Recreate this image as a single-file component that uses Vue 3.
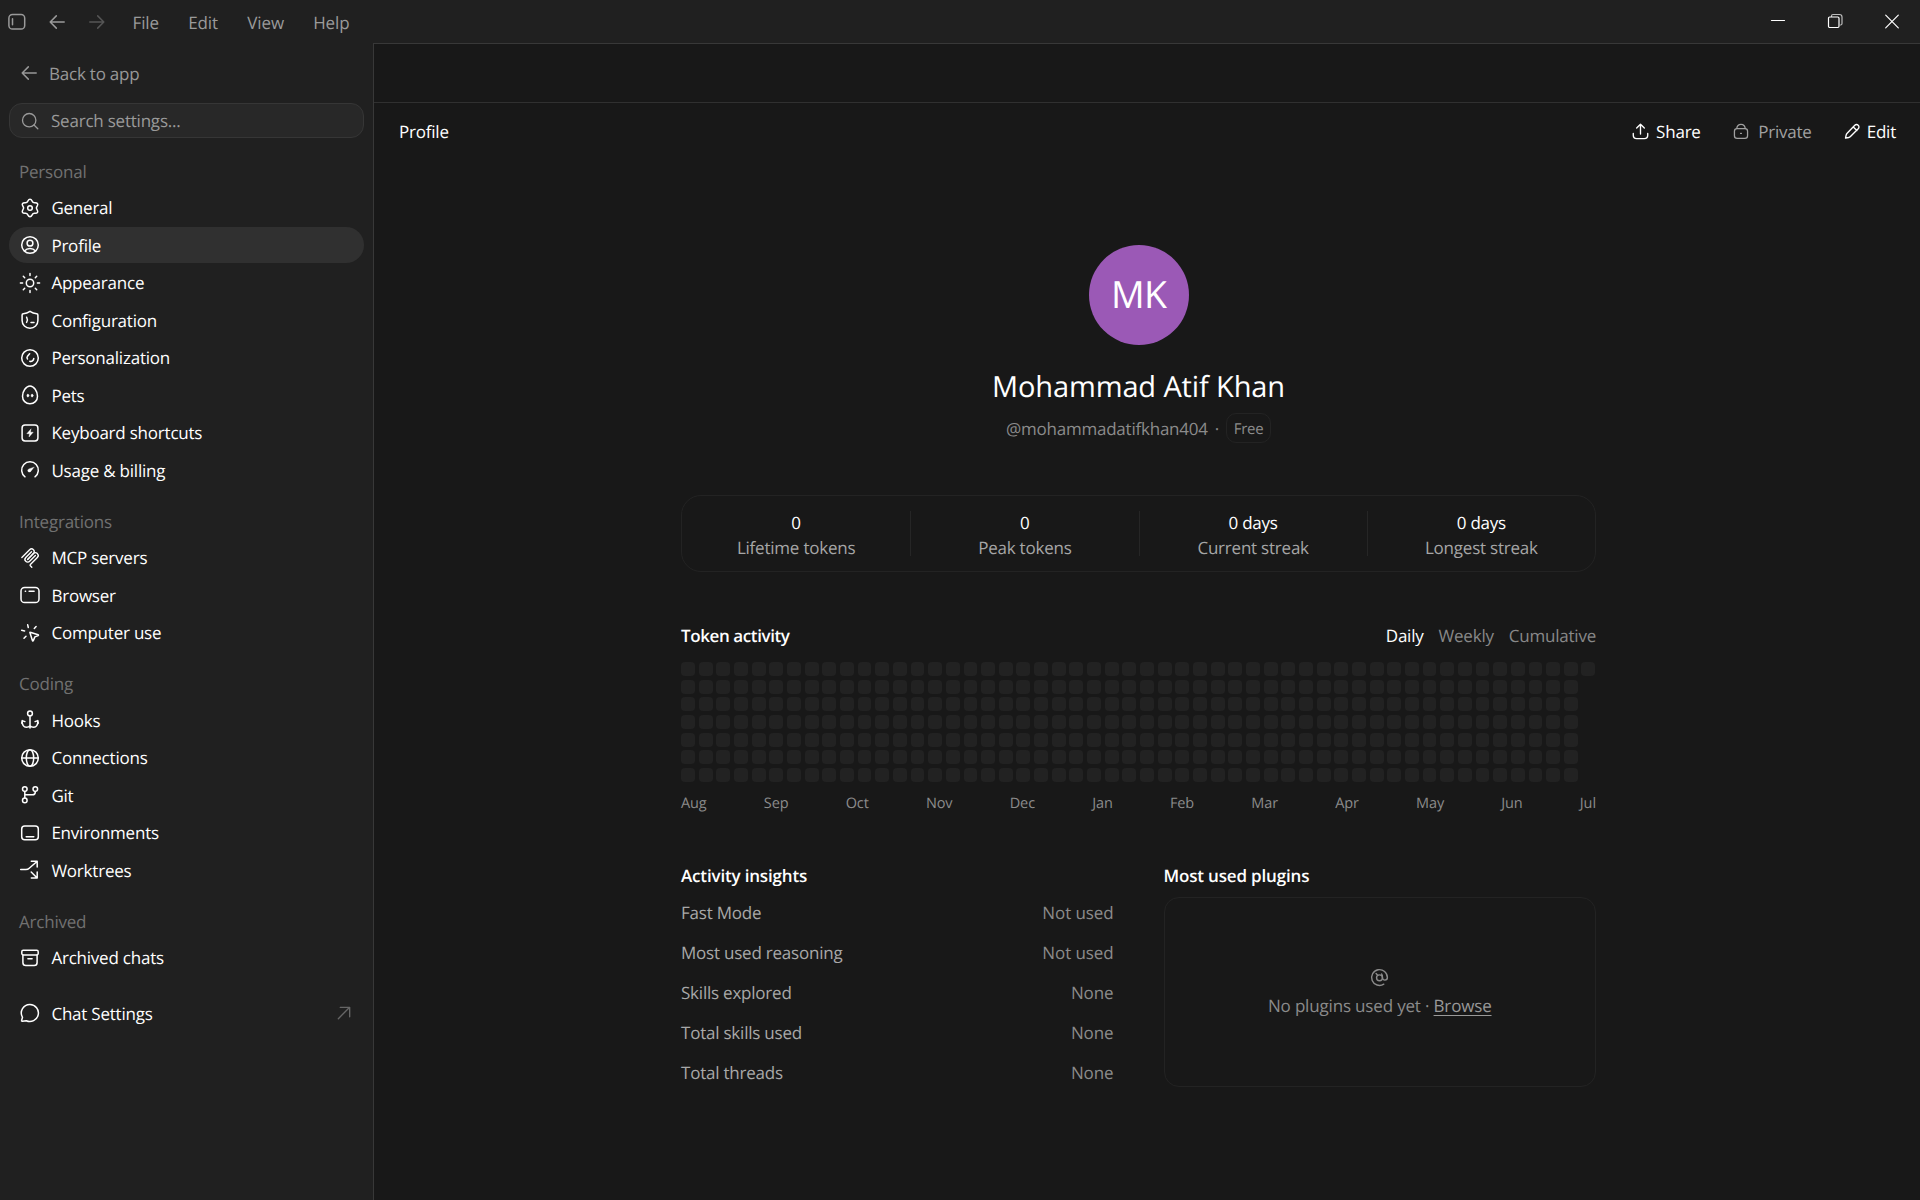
<template>
  <div class="app">
    <header class="titlebar">
      <div class="titlebar-left">
        <svg class="tb-icon" viewBox="0 0 20 20" v-html="icons.panel"></svg>
        <svg class="tb-icon" viewBox="0 0 20 20" v-html="icons.back"></svg>
        <svg class="tb-icon dim" viewBox="0 0 20 20" v-html="icons.forward"></svg>
        <nav class="menu">
          <span v-for="m in menus" :key="m">{{ m }}</span>
        </nav>
      </div>
      <div class="window-controls">
        <svg viewBox="0 0 20 20"><path d="M3.5 9.500h13" /></svg>
        <svg viewBox="0 0 20 20">
          <path class="ghost" d="M6.5 5.5V5c0-.8.5-1.500 1.500-1.500h6.500c1.500 0 2.500 1 2.500 2.500V12.500c0 .8-.6 1.500-1.500 1.500" />
          <rect x="3.500" y="6" width="10.500" height="10.500" rx="1.200" />
        </svg>
        <svg viewBox="0 0 20 20"><path d="M3.700 4.200l12.600 12.600M16.300 4.200L3.700 16.800" /></svg>
      </div>
    </header>

    <div class="body">
      <aside class="sidebar">
        <div class="back-link">
          <svg viewBox="0 0 20 20" v-html="icons.back"></svg>
          <span>Back to app</span>
        </div>
        <div class="search">
          <svg viewBox="0 0 20 20" v-html="icons.search"></svg>
          <span>Search settings...</span>
        </div>

        <section class="nav-group" v-for="group in groups" :key="group.title">
          <h3 class="nav-label">{{ group.title }}</h3>
          <div class="nav-list">
            <div
              class="nav-item"
              v-for="item in group.items"
              :key="item.label"
              :class="{ active: item.label === 'Profile' }"
            >
              <svg viewBox="0 0 20 20" v-html="icons[item.icon]"></svg>
              <span>{{ item.label }}</span>
            </div>
          </div>
        </section>

        <div class="nav-item chat-settings">
          <svg viewBox="0 0 20 20" v-html="icons.chat"></svg>
          <span>Chat Settings</span>
          <svg class="external" viewBox="0 0 20 20" v-html="icons.external"></svg>
        </div>
      </aside>

      <main class="main">
        <div class="toolbar"></div>

        <div class="page-header">
          <span class="page-title">Profile</span>
          <div class="actions">
            <span class="action"><svg viewBox="0 0 20 20" v-html="icons.share"></svg>Share</span>
            <span class="action muted"><svg viewBox="0 0 20 20" v-html="icons.lock"></svg>Private</span>
            <span class="action edit"><svg viewBox="0 0 20 20" v-html="icons.pencil"></svg>Edit</span>
          </div>
        </div>

        <div class="content">
          <div class="identity">
            <div class="avatar">MK</div>
            <h1 class="name">Mohammad Atif Khan</h1>
            <div class="handle">
              <span>@mohammadatifkhan404</span>
              <span class="dot">·</span>
              <span class="plan">Free</span>
            </div>
          </div>

          <div class="stats">
            <div class="stat" v-for="s in stats" :key="s.label">
              <div class="stat-value">{{ s.value }}</div>
              <div class="stat-label">{{ s.label }}</div>
            </div>
          </div>

          <div class="activity-head">
            <h2>Token activity</h2>
            <div class="tabs">
              <span class="on">Daily</span>
              <span>Weekly</span>
              <span>Cumulative</span>
            </div>
          </div>
          <div class="heatmap">
            <div class="cell" v-for="n in dayCount" :key="n"></div>
          </div>
          <div class="months">
            <span v-for="m in months" :key="m">{{ m }}</span>
          </div>

          <div class="columns">
            <section>
              <h2>Activity insights</h2>
              <dl class="insights">
                <div class="insight" v-for="i in insights" :key="i.label">
                  <dt>{{ i.label }}</dt>
                  <dd>{{ i.value }}</dd>
                </div>
              </dl>
            </section>
            <section>
              <h2 class="plugins-title">Most used plugins</h2>
              <div class="plugins">
                <svg viewBox="0 0 20 20" v-html="icons.at"></svg>
                <p>No plugins used yet · <a>Browse</a></p>
              </div>
            </section>
          </div>
        </div>
      </main>
    </div>
  </div>
</template>

<script setup>
const menus = ['File', 'Edit', 'View', 'Help']

// inner markup for 20x20 icons, stroke comes from css
const icons = {
  panel: '<rect x="1.900" y="2.600" width="15.800" height="14.400" rx="3.600"/><path d="M5.500 6.800v6"/>',
  back: '<path d="M17.200 10H3.200M9.300 3.900L3.200 10l6.100 6.100"/>',
  forward: '<path d="M2.800 10h14M10.700 3.900l6.100 6.100-6.100 6.100"/>',
  search: '<circle cx="9.200" cy="9.200" r="6.700"/><path d="M14 14l3.800 3.800"/>',
  gear: '<path d="M10 1.300C12 1.300 12.070 3.810 13.200 4.460C14.330 5.110 16.530 3.920 17.530 5.650C18.530 7.380 16.400 8.700 16.400 10C16.400 11.300 18.530 12.620 17.530 14.350C16.530 16.080 14.330 14.890 13.200 15.540C12.070 16.190 12 18.700 10 18.700C8 18.700 7.930 16.190 6.800 15.540C5.670 14.890 3.470 16.080 2.470 14.350C1.470 12.620 3.600 11.300 3.600 10C3.600 8.700 1.470 7.380 2.470 5.650C3.470 3.920 5.670 5.110 6.800 4.460C7.930 3.810 8 1.300 10 1.300Z"/><circle cx="10" cy="10" r="2.300"/>',
  profile: '<circle cx="10" cy="10" r="8.300"/><circle cx="10" cy="8.200" r="2.900"/><path d="M4.600 15.900c1.300-1.700 3.200-2.500 5.400-2.500s4.100.8 5.400 2.500"/>',
  sun: '<circle cx="10" cy="10" r="3.700"/><path d="M10 .4v2.200M10 17.400v2.200M.4 10h2.200M17.400 10h2.200M3.300 3.300l1.400 1.400M15.300 15.300l1.400 1.400M3.300 16.700l1.400-1.400M15.300 4.700l1.400-1.400"/>',
  shield: '<path d="M10 1.300c1.900 1.300 4.300 2.200 6.700 2.400.7.100 1.200.6 1.200 1.200V10.500c0 4.500-3.500 7.800-7.900 7.800S2.100 15 2.100 10.500V4.900c0-.6.5-1.100 1.200-1.200C5.700 3.500 8.100 2.600 10 1.300Z"/><path d="M6.600 7.200c1.200 2 1.200 3.200 0 5.200M11 12.500h3"/>',
  personal: '<circle cx="10" cy="10" r="8.300"/><path d="M9.600 5.700L7.500 8.300c-.6.8-.7 1.900 0 2.700M9.800 13.300c1.900.7 3.900-.8 4-2.900"/>',
  egg: '<path d="M10 1C13.900 1 17.500 6.400 17.500 11.200C17.500 15.600 14.300 18.800 10 18.800S2.500 15.600 2.500 11.200C2.500 6.400 6.100 1 10 1Z"/><ellipse class="solid" cx="7.900" cy="10.600" rx="1" ry="1.500"/><ellipse class="solid" cx="12.100" cy="10.600" rx="1" ry="1.500"/>',
  keyboard: '<rect x="2.100" y="2.100" width="15.800" height="15.800" rx="2.900"/><path class="solid" d="M10.900 6.100L6.800 10.700h2.700l-.5 3.300 4.200-4.800h-2.700Z"/>',
  gauge: '<path d="M5 16.800A8.350 8.350 0 1 1 15 16.800"/><path class="solid" d="M13.900 7.200L9 8.900c-2.300 1-1 3.800 1.100 3 .6-.3 1-.8 1.200-1.200Z"/>',
  mcp: '<g transform="translate(-.2 -.2) scale(.114)" stroke-width="12"><path d="M18 84.850L85.880 16.970C95.250 7.600 110.450 7.600 119.820 16.970C129.200 26.340 129.200 41.540 119.820 50.910L68.560 102.180"/><path d="M69.270 101.470L119.820 50.910C129.200 41.540 144.390 41.540 153.770 50.910L154.120 51.270C163.490 60.640 163.490 75.830 154.120 85.210L92.720 146.600C89.600 149.720 89.600 154.790 92.720 157.910L105.330 170.520"/><path d="M102.850 33.940L52.650 84.150C43.280 93.520 43.280 108.710 52.650 118.090C62.020 127.460 77.220 127.460 86.590 118.090L136.790 67.880"/></g>',
  browser: '<rect x="1" y="2.400" width="18" height="15.200" rx="3.600"/><path d="M5.300 6.200h.3M9.100 6.200h5"/>',
  cursor: '<path d="M10.200 9.200l7.900 2.500c.5.200.5.700.1.900l-3.300 1.300-1.600 3.700c-.2.400-.8.400-.9-.1l-2.500-7.900c-.1-.3.100-.5.300-.4Z"/><path d="M7.700 1.800l.6 2.700M1.700 7.300l2.900.6M4 15.300l2-2M14.300 5.500l1.800-2"/>',
  anchor: '<circle cx="10" cy="3.400" r="2.400"/><path d="M10 5.800v12.100M1.700 13.200l.5-2.600 2.700 1M18.300 13.200l-.5-2.600-2.700 1M2.200 11.200c-.3 3.800 1.600 6 4.100 6 1.900 0 3-.6 3.700-1.600.7 1 1.800 1.600 3.700 1.600 2.500 0 4.400-2.200 4.100-6"/>',
  globe: '<circle cx="10" cy="10" r="8.300"/><ellipse cx="10" cy="10" rx="3.700" ry="8.300"/><path d="M1.700 10h16.600"/>',
  git: '<circle cx="4.800" cy="4.100" r="2.300"/><circle cx="15.300" cy="4.100" r="2.300"/><circle cx="4.800" cy="15.400" r="2.300"/><path d="M4.800 6.400v6.700M4.800 9.800h7.600c1.900 0 2.900-1 2.900-2.900V6.400"/>',
  env: '<rect x="1.700" y="2.900" width="16.600" height="13.900" rx="3"/><path d="M6.200 13.700h7.600"/>',
  worktree: '<path d="M.7 9.600h5.200c1.500 0 2.300-.3 3.300-1.300L17 1.500M11.300 1.200H17.200V7.100M11.200 12l5.700 5.700M11.300 18h5.900v-5.900"/>',
  archive: '<rect x="1.800" y="2.300" width="16.400" height="4.600" rx="1.400"/><path d="M2.900 6.900v7.600c0 1.900 1.100 3.100 3 3.100h8.200c1.900 0 3-1.200 3-3.100V6.900M7.900 10.700h4.200"/>',
  chat: '<path d="M10 1.500a8.500 8.500 0 1 1-3.700 16.200l-3.900.6c-.7.100-1-.3-.8-.9l.9-3.100A8.500 8.500 0 0 1 10 1.500Z"/>',
  external: '<path d="M3.700 16.300L16 4M5.800 3.700h10.500v10.500"/>',
  share: '<path d="M10 13V1.800M5.500 6L10 1.500 14.500 6M1.500 12.300v2.200c0 2.400 1.500 3.800 3.900 3.800h9.200c2.400 0 3.900-1.400 3.900-3.800v-2.200"/>',
  lock: '<rect x="1.800" y="6.300" width="16.400" height="12.400" rx="3.300"/><path d="M4.700 6.200C5 2.900 7.100 1 10 1s5 1.900 5.300 5.200M9.500 12.400h1"/>',
  pencil: '<path d="M12.700 2.700c1.300-1.300 2.900-1.200 4 0 1.200 1.100 1.200 2.700 0 4L7.600 15.900c-.7.700-1.300 1-2.200 1.200l-3.600.7.700-3.600c.2-.9.500-1.500 1.200-2.200ZM10.900 4.600l4.300 4.300"/>',
  at: '<circle cx="10" cy="10.300" r="3.100"/><path d="M6.400 5.900l1.700 1.800M12.200 6.200c1 1 1 2.400.9 3.900 0 3.600 5.200 3.500 5.200 0A8.300 8.300 0 1 0 14.500 17"/>',
}

const groups = [
  {
    title: 'Personal',
    items: [
      { label: 'General', icon: 'gear' },
      { label: 'Profile', icon: 'profile' },
      { label: 'Appearance', icon: 'sun' },
      { label: 'Configuration', icon: 'shield' },
      { label: 'Personalization', icon: 'personal' },
      { label: 'Pets', icon: 'egg' },
      { label: 'Keyboard shortcuts', icon: 'keyboard' },
      { label: 'Usage & billing', icon: 'gauge' },
    ],
  },
  {
    title: 'Integrations',
    items: [
      { label: 'MCP servers', icon: 'mcp' },
      { label: 'Browser', icon: 'browser' },
      { label: 'Computer use', icon: 'cursor' },
    ],
  },
  {
    title: 'Coding',
    items: [
      { label: 'Hooks', icon: 'anchor' },
      { label: 'Connections', icon: 'globe' },
      { label: 'Git', icon: 'git' },
      { label: 'Environments', icon: 'env' },
      { label: 'Worktrees', icon: 'worktree' },
    ],
  },
  {
    title: 'Archived',
    items: [{ label: 'Archived chats', icon: 'archive' }],
  },
]

const stats = [
  { value: '0', label: 'Lifetime tokens' },
  { value: '0', label: 'Peak tokens' },
  { value: '0 days', label: 'Current streak' },
  { value: '0 days', label: 'Longest streak' },
]

// 51 full weeks + the first day of the current one
const dayCount = 51 * 7 + 1

const months = ['Aug', 'Sep', 'Oct', 'Nov', 'Dec', 'Jan', 'Feb', 'Mar', 'Apr', 'May', 'Jun', 'Jul']

const insights = [
  { label: 'Fast Mode', value: 'Not used' },
  { label: 'Most used reasoning', value: 'Not used' },
  { label: 'Skills explored', value: 'None' },
  { label: 'Total skills used', value: 'None' },
  { label: 'Total threads', value: 'None' },
]
</script>

<style>
body {
  background: #202020;
}
</style>

<style scoped>
.app {
  display: flex;
  flex-direction: column;
  height: 1200px;
  overflow: hidden;
  background: #202020;
  color: #fff;
  font-family: 'Segoe UI', 'Open Sans', 'Noto Sans', sans-serif;
  font-size: 17px;
  line-height: 25px;
  letter-spacing: -0.22px;
  white-space: nowrap;
  text-rendering: geometricPrecision;
}

h1, h2, h3, p, dl, dt, dd {
  margin: 0;
  font-size: inherit;
  font-weight: 400;
}

svg {
  flex: none;
  width: 20px;
  height: 20px;
  fill: none;
  stroke: currentColor;
  stroke-width: 1.5;
  stroke-linecap: round;
  stroke-linejoin: round;
  overflow: visible;
}

svg :deep(.solid) {
  fill: currentColor;
  stroke-width: 0.4;
}

svg :deep(g) {
  stroke-width: 12;
}

/* ── Title bar ── */
.titlebar {
  flex: none;
  display: flex;
  justify-content: space-between;
  height: 43px;
}

.titlebar-left {
  display: flex;
  align-items: center;
  padding-left: 7px;
  color: #9a9a9a;
}

.tb-icon {
  margin-right: 20px;
}

.dim {
  color: #555;
}

.menu {
  display: flex;
  gap: 29.200px;
  padding: 1px 0 0 5.500px;
  letter-spacing: -0.1px;
}

.window-controls {
  display: flex;
  align-items: center;
  gap: 37px;
  padding: 0 18px 1px 0;
}

.window-controls svg {
  stroke-width: 1.2;
}

.ghost {
  opacity: 0.7;
}

/* ── Sidebar ── */
.body {
  flex: 1;
  display: flex;
  min-height: 0;
}

.sidebar {
  flex: none;
  width: 373px;
  box-sizing: border-box;
  padding: 12px 9px 0;
}

.back-link {
  display: flex;
  align-items: center;
  gap: 10px;
  height: 36px;
  padding-left: 10px;
  color: #989898;
}

.search {
  display: flex;
  align-items: center;
  gap: 11px;
  box-sizing: border-box;
  height: 35px;
  margin: 12px 0 16.500px;
  padding-left: 10px;
  border: 1px solid #363636;
  border-radius: 13px;
  background: #282828;
  color: #9a9a9a;
}

.search svg {
  stroke-width: 1.3;
}

.nav-group {
  margin-bottom: 16.25px;
}

.nav-label {
  height: 35px;
  padding-left: 10px;
  line-height: 33.500px;
  color: #717171;
}

.nav-list {
  display: flex;
  flex-direction: column;
  gap: 1.25px;
}

.nav-item {
  display: flex;
  align-items: center;
  gap: 11px;
  height: 36.25px;
  padding: 0 10px 0 11.400px;
  border-radius: 18px;
}

.nav-item.active {
  background: #303030;
}

.chat-settings {
  margin-top: 19.500px;
}

.external {
  width: 18px;
  height: 18px;
  margin-left: auto;
  margin-right: 1px;
  color: #666;
}

/* ── Main ── */
.main {
  flex: 1;
  border-top: 1px solid #383838;
  border-left: 1px solid #383838;
  background: #181818;
}

.toolbar {
  height: 58px;
  border-bottom: 1px solid #303030;
}

.page-header {
  display: flex;
  align-items: center;
  justify-content: space-between;
  height: 57px;
  padding: 0 24px 0 25px;
}

.actions {
  display: flex;
  gap: 32px;
}

.action {
  display: flex;
  align-items: center;
  gap: 7px;
}

.action svg {
  width: 17px;
  height: 17px;
  stroke-width: 1.6;
}

.action.muted {
  gap: 9.500px;
  color: #a0a0a0;
}

.action.muted svg {
  width: 16px;
}

.action.edit {
  gap: 6px;
}

.content {
  width: 915px;
  margin: 85px 0 0 307px;
}

.identity {
  display: flex;
  flex-direction: column;
  align-items: center;
}

.avatar {
  width: 100px;
  height: 100px;
  border-radius: 50%;
  background: #9b59b6;
  font-size: 37.5px;
  line-height: 98px;
  letter-spacing: -0.8px;
  text-align: center;
}

.name {
  margin-top: 21.500px;
  font-size: 29px;
  line-height: 40px;
  letter-spacing: -0.13px;
}

.handle {
  display: flex;
  align-items: center;
  height: 30px;
  margin-top: 6.500px;
  color: #8b8b8b;
}

.dot {
  margin: 0 7px;
}

.plan {
  box-sizing: border-box;
  width: 45px;
  height: 30px;
  border: 1px solid #232323;
  border-radius: 10px;
  font-size: 15px;
  line-height: 30px;
  text-align: center;
}

.stats {
  display: grid;
  grid-template-columns: repeat(4, 1fr);
  box-sizing: border-box;
  height: 77px;
  margin-top: 52px;
  padding: 15px 0 14px;
  border: 1px solid #232323;
  border-radius: 20px;
  text-align: center;
}

.stat {
  height: 45px;
}

.stat + .stat {
  border-left: 1px solid #262626;
}

.stat-value {
  margin-top: -1px;
}

.stat-label {
  color: #a6a6a6;
}

h2 {
  font-weight: 600;
  line-height: 30px;
  letter-spacing: -0.4px;
}

.activity-head {
  display: flex;
  justify-content: space-between;
  height: 30px;
  margin-top: 48.700px;
  line-height: 30px;
}

.tabs {
  display: flex;
  gap: 15px;
  color: #888;
}

.tabs .on {
  color: #fff;
}

.heatmap {
  display: grid;
  grid-template-rows: repeat(7, 13.920px);
  grid-auto-columns: 13.920px;
  grid-auto-flow: column;
  gap: 3.750px;
  margin-top: 11.300px;
}

.cell {
  border-radius: 3.750px;
  background: #222;
}

.months {
  display: flex;
  justify-content: space-between;
  margin-top: 12px;
  font-size: 14.500px;
  line-height: 20px;
  letter-spacing: -0.1px;
  color: #8b8b8b;
}

.columns {
  display: grid;
  grid-template-columns: 1fr 1fr;
  gap: 50px;
  margin-top: 47.300px;
}

.columns h2 {
  letter-spacing: -0.17px;
}

.insights {
  margin-top: 2px;
}

.insight {
  display: flex;
  justify-content: space-between;
  line-height: 40px;
  color: #a8a8a8;
}

.insight dd {
  color: #8b8b8b;
  letter-spacing: -0.1px;
}

.plugins {
  display: flex;
  flex-direction: column;
  align-items: center;
  box-sizing: border-box;
  height: 190px;
  margin-top: 5.600px;
  padding-top: 70px;
  border: 1px solid #232323;
  border-radius: 15px;
  color: #8b8b8b;
}

.plugins svg {
  width: 19px;
  height: 19px;
}

.plugins p {
  margin-top: 6.500px;
  letter-spacing: -0.17px;
}

.plugins a {
  text-decoration: underline;
  text-decoration-thickness: 1px;
  text-underline-offset: 3px;
  color: #999;
}
</style>
